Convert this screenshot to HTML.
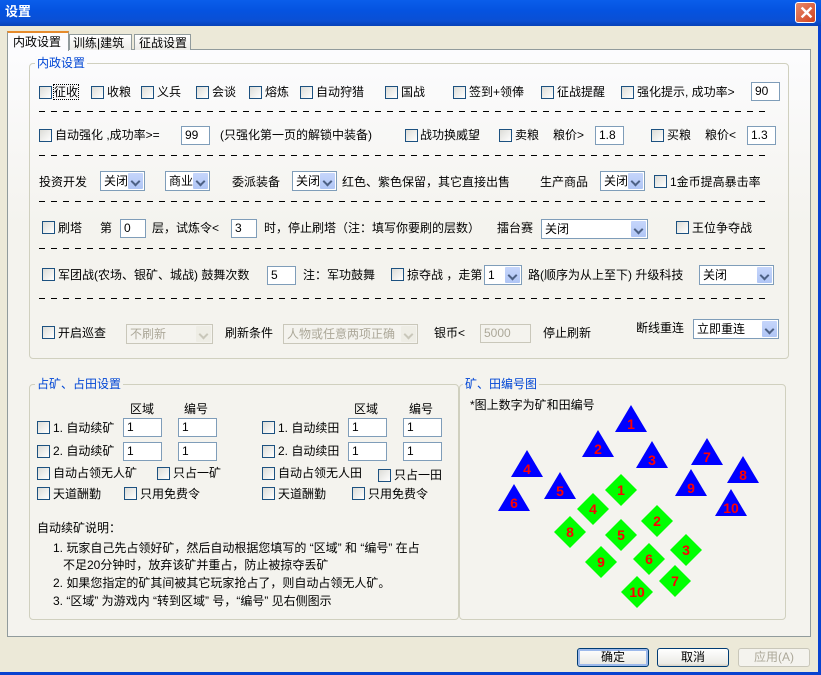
<!DOCTYPE html>
<html><head><meta charset="utf-8"><style>
*{margin:0;padding:0;box-sizing:border-box}
body{width:821px;height:675px;overflow:hidden;background:#ECE9D8;font:12px "Liberation Sans","Noto Sans CJK SC",sans-serif;color:#000;position:relative}
.a{position:absolute;white-space:nowrap;line-height:14px}
.cb{position:absolute;width:13px;height:13px;border:1px solid #1C5180;background:linear-gradient(135deg,#DCDCD7,#fff)}
.in{position:absolute;height:19px;border:1px solid #7F9DB9;background:#fff;padding:1px 3px;line-height:15px;font-size:12px}
.sel{position:absolute;height:20px;border:1px solid #7F9DB9;background:#fff;padding:2px 3px;line-height:14px}
.sel:after{content:"";position:absolute;right:1px;top:1px;width:15px;height:16px;background:#B9CEF8 linear-gradient(#C6D6FB,#B0C6F5);border-radius:1px}
.sel:before{content:"";position:absolute;right:5px;top:6px;width:5px;height:5px;border-right:2px solid #4D6185;border-bottom:2px solid #4D6185;transform:rotate(45deg);z-index:2}
.dis{border-color:#C9C7BA;color:#ACA899;background:#F4F3EE}
.dis:after{background:#EEEDE5}
.dis:before{border-color:#C9C7BA}
.dash{position:absolute;left:39px;width:728px;height:1px;background:repeating-linear-gradient(90deg,#000 0 6px,transparent 6px 12px)}
.grp{position:absolute;border:1px solid #D0D0BF;border-radius:4px}
.gl{position:absolute;color:#0046D5;background:#F8F8F6;padding:0 2px;line-height:14px}
.btn{position:absolute;top:648px;height:19px;width:72px;border:1px solid #003C74;border-radius:3px;background:linear-gradient(#fff,#ECEBE6 85%,#D6D0C5);text-align:center;line-height:16px}
</style></head><body>
<div style="position:absolute;left:0;top:0;width:821px;height:26px;background:linear-gradient(#0A5EEB,#0553E0 40%,#0A4FD4 80%,#0842B8)"></div>
<div class="a" style="left:5px;top:5px;color:#fff;font-weight:bold;font-size:13px">设置</div>
<div style="position:absolute;left:795px;top:2px;width:21px;height:21px;border:1px solid #fff;border-radius:3px;background:linear-gradient(135deg,#E68A6E,#D2421C)"></div>
<div class="a" style="left:799px;top:3px;color:#fff;font-weight:bold;font-size:18px;line-height:20px">✕</div>
<div style="position:absolute;right:0;top:26px;width:3px;height:649px;background:#0842D0"></div>
<div style="position:absolute;left:0;top:672px;width:821px;height:3px;background:#0842D0"></div>

<div style="position:absolute;left:7px;top:49px;width:804px;height:588px;border:1px solid #919B9C;background:linear-gradient(#FCFCFE,#F4F3EE 30%)"></div>
<div style="position:absolute;left:7px;top:31px;width:62px;height:20px;border:1px solid #919B9C;border-bottom:none;border-top:2px solid #E68B2C;background:#FCFCFE"></div>
<div class="a" style="left:13px;top:35px">内政设置</div>
<div style="position:absolute;left:69px;top:34px;width:63px;height:16px;border:1px solid #919B9C;border-bottom:none;background:linear-gradient(#fff,#ECEBE6)"></div>
<div class="a" style="left:73px;top:36px">训练|建筑</div>
<div style="position:absolute;left:134px;top:34px;width:57px;height:16px;border:1px solid #919B9C;border-bottom:none;background:linear-gradient(#fff,#ECEBE6)"></div>
<div class="a" style="left:139px;top:36px">征战设置</div>

<div class="grp" style="left:29px;top:63px;width:760px;height:296px"></div>
<div class="gl" style="left:35px;top:56px;background:#FBFBFC">内政设置</div>

<div class="cb" style="left:39px;top:86px"></div><div class="a" style="left:54px;top:85px;outline:1px dotted #000">征收</div>
<div class="cb" style="left:91px;top:86px"></div><div class="a" style="left:107px;top:85px">收粮</div>
<div class="cb" style="left:141px;top:86px"></div><div class="a" style="left:157px;top:85px">义兵</div>
<div class="cb" style="left:196px;top:86px"></div><div class="a" style="left:212px;top:85px">会谈</div>
<div class="cb" style="left:249px;top:86px"></div><div class="a" style="left:265px;top:85px">熔炼</div>
<div class="cb" style="left:300px;top:86px"></div><div class="a" style="left:316px;top:85px">自动狩猎</div>
<div class="cb" style="left:385px;top:86px"></div><div class="a" style="left:401px;top:85px">国战</div>
<div class="cb" style="left:453px;top:86px"></div><div class="a" style="left:469px;top:85px">签到+领俸</div>
<div class="cb" style="left:541px;top:86px"></div><div class="a" style="left:557px;top:85px">征战提醒</div>
<div class="cb" style="left:621px;top:86px"></div><div class="a" style="left:637px;top:85px">强化提示, 成功率&gt;</div>
<div class="in" style="left:751px;top:82px;width:29px">90</div>
<div class="dash" style="top:111px"></div>

<div class="cb" style="left:39px;top:129px"></div><div class="a" style="left:55px;top:128px">自动强化 ,成功率&gt;=</div>
<div class="in" style="left:181px;top:126px;width:29px">99</div>
<div class="a" style="left:220px;top:128px">(只强化第一页的解锁中装备)</div>
<div class="cb" style="left:405px;top:129px"></div><div class="a" style="left:420px;top:128px">战功换威望</div>
<div class="cb" style="left:499px;top:129px"></div><div class="a" style="left:515px;top:128px">卖粮</div>
<div class="a" style="left:553px;top:128px">粮价&gt;</div>
<div class="in" style="left:595px;top:126px;width:29px">1.8</div>
<div class="cb" style="left:651px;top:129px"></div><div class="a" style="left:667px;top:128px">买粮</div>
<div class="a" style="left:705px;top:128px">粮价&lt;</div>
<div class="in" style="left:747px;top:126px;width:29px">1.3</div>
<div class="dash" style="top:155px"></div>

<div class="a" style="left:39px;top:175px">投资开发</div>
<div class="sel" style="left:100px;top:171px;width:45px">关闭</div>
<div class="sel" style="left:165px;top:171px;width:45px">商业</div>
<div class="a" style="left:232px;top:175px">委派装备</div>
<div class="sel" style="left:292px;top:171px;width:45px">关闭</div>
<div class="a" style="left:342px;top:175px">红色、紫色保留，其它直接出售</div>
<div class="a" style="left:540px;top:175px">生产商品</div>
<div class="sel" style="left:600px;top:171px;width:45px">关闭</div>
<div class="cb" style="left:654px;top:175px"></div><div class="a" style="left:670px;top:175px">1金币提高暴击率</div>
<div class="dash" style="top:201px"></div>

<div class="cb" style="left:42px;top:221px"></div><div class="a" style="left:58px;top:221px">刷塔</div>
<div class="a" style="left:100px;top:221px">第</div>
<div class="in" style="left:120px;top:219px;width:26px">0</div>
<div class="a" style="left:152px;top:221px">层，试炼令&lt;</div>
<div class="in" style="left:231px;top:219px;width:26px">3</div>
<div class="a" style="left:264px;top:221px">时，停止刷塔（注：填写你要刷的层数）</div>
<div class="a" style="left:497px;top:221px">擂台赛</div>
<div class="sel" style="left:541px;top:219px;width:107px">关闭</div>
<div class="cb" style="left:676px;top:221px"></div><div class="a" style="left:692px;top:221px">王位争夺战</div>
<div class="dash" style="top:248px"></div>

<div class="cb" style="left:42px;top:268px"></div><div class="a" style="left:58px;top:268px">军团战(农场、银矿、城战) 鼓舞次数</div>
<div class="in" style="left:267px;top:266px;width:29px">5</div>
<div class="a" style="left:303px;top:268px">注：军功鼓舞</div>
<div class="cb" style="left:391px;top:268px"></div><div class="a" style="left:407px;top:268px">掠夺战 ，走第</div>
<div class="sel" style="left:484px;top:265px;width:38px">1</div>
<div class="a" style="left:528px;top:268px">路(顺序为从上至下) 升级科技</div>
<div class="sel" style="left:699px;top:265px;width:75px">关闭</div>
<div class="dash" style="top:298px"></div>

<div class="cb" style="left:42px;top:326px"></div><div class="a" style="left:58px;top:326px">开启巡查</div>
<div class="sel dis" style="left:126px;top:324px;width:87px">不刷新</div>
<div class="a" style="left:225px;top:326px">刷新条件</div>
<div class="sel dis" style="left:283px;top:324px;width:135px">人物或任意两项正确</div>
<div class="a" style="left:434px;top:326px">银币&lt;</div>
<div class="in dis" style="left:480px;top:324px;width:51px">5000</div>
<div class="a" style="left:543px;top:326px">停止刷新</div>
<div class="a" style="left:636px;top:321px">断线重连</div>
<div class="sel" style="left:693px;top:319px;width:86px">立即重连</div>

<div class="grp" style="left:29px;top:384px;width:430px;height:236px"></div>
<div class="gl" style="left:35px;top:377px;background:#F4F3EE">占矿、占田设置</div>
<div class="a" style="left:130px;top:402px">区域</div><div class="a" style="left:184px;top:402px">编号</div>
<div class="a" style="left:354px;top:402px">区域</div><div class="a" style="left:409px;top:402px">编号</div>
<div class="cb" style="left:37px;top:421px"></div><div class="a" style="left:53px;top:421px">1. 自动续矿</div>
<div class="in" style="left:123px;top:418px;width:39px;height:19px">1</div><div class="in" style="left:178px;top:418px;width:39px;height:19px">1</div>
<div class="cb" style="left:262px;top:421px"></div><div class="a" style="left:278px;top:421px">1. 自动续田</div>
<div class="in" style="left:348px;top:418px;width:39px;height:19px">1</div><div class="in" style="left:403px;top:418px;width:39px;height:19px">1</div>
<div class="cb" style="left:37px;top:445px"></div><div class="a" style="left:53px;top:444px">2. 自动续矿</div>
<div class="in" style="left:123px;top:442px;width:39px;height:19px">1</div><div class="in" style="left:178px;top:442px;width:39px;height:19px">1</div>
<div class="cb" style="left:262px;top:445px"></div><div class="a" style="left:278px;top:444px">2. 自动续田</div>
<div class="in" style="left:348px;top:442px;width:39px;height:19px">1</div><div class="in" style="left:403px;top:442px;width:39px;height:19px">1</div>
<div class="cb" style="left:37px;top:467px"></div><div class="a" style="left:53px;top:466px">自动占领无人矿</div>
<div class="cb" style="left:157px;top:467px"></div><div class="a" style="left:173px;top:466px">只占一矿</div>
<div class="cb" style="left:262px;top:467px"></div><div class="a" style="left:278px;top:466px">自动占领无人田</div>
<div class="cb" style="left:378px;top:469px"></div><div class="a" style="left:394px;top:468px">只占一田</div>
<div class="cb" style="left:37px;top:487px"></div><div class="a" style="left:53px;top:487px">天道酬勤</div>
<div class="cb" style="left:124px;top:487px"></div><div class="a" style="left:140px;top:487px">只用免费令</div>
<div class="cb" style="left:262px;top:487px"></div><div class="a" style="left:278px;top:487px">天道酬勤</div>
<div class="cb" style="left:352px;top:487px"></div><div class="a" style="left:368px;top:487px">只用免费令</div>
<div class="a" style="left:37px;top:521px">自动续矿说明：</div>
<div class="a" style="left:53px;top:541px">1. 玩家自己先占领好矿，然后自动根据您填写的 “区域” 和 “编号” 在占</div>
<div class="a" style="left:63px;top:558px">不足20分钟时，放弃该矿并重占，防止被掠夺丢矿</div>
<div class="a" style="left:53px;top:576px">2. 如果您指定的矿其间被其它玩家抢占了，则自动占领无人矿。</div>
<div class="a" style="left:53px;top:594px">3. “区域” 为游戏内 “转到区域” 号，“编号” 见右侧图示</div>

<div class="grp" style="left:459px;top:384px;width:327px;height:236px"></div>
<div class="gl" style="left:463px;top:377px;background:#F4F3EE">矿、田编号图</div>
<div class="a" style="left:470px;top:398px">*图上数字为矿和田编号</div>
<svg style="position:absolute;left:0;top:0" width="821" height="675" font-family="Liberation Sans,sans-serif" font-weight="bold" font-size="14" fill="#FF0000" text-anchor="middle">
<g fill="#0000FF">
<polygon points="631,405 615,432 647,432"/><polygon points="598,430 582,457 614,457"/><polygon points="652,441 636,468 668,468"/>
<polygon points="707,438 691,465 723,465"/><polygon points="743,456 727,483 759,483"/><polygon points="527,450 511,477 543,477"/>
<polygon points="560,472 544,499 576,499"/><polygon points="514,484 498,511 530,511"/><polygon points="691,469 675,496 707,496"/>
<polygon points="731,489 715,516 747,516"/></g>
<g fill="#00FF00">
<polygon points="621,474 637,490 621,506 605,490"/><polygon points="593,493 609,509 593,525 577,509"/><polygon points="570,516 586,532 570,548 554,532"/>
<polygon points="621,519 637,535 621,551 605,535"/><polygon points="657,505 673,521 657,537 641,521"/><polygon points="686,534 702,550 686,566 670,550"/>
<polygon points="649,543 665,559 649,575 633,559"/><polygon points="601,546 617,562 601,578 585,562"/><polygon points="675,565 691,581 675,597 659,581"/>
<polygon points="637,576 653,592 637,608 621,592"/></g>
<text x="631" y="429">1</text><text x="598" y="454">2</text><text x="652" y="465">3</text><text x="707" y="462">7</text><text x="743" y="480">8</text>
<text x="527" y="474">4</text><text x="560" y="496">5</text><text x="514" y="508">6</text><text x="691" y="493">9</text><text x="731" y="513">10</text>
<text x="621" y="495">1</text><text x="593" y="514">4</text><text x="570" y="537">8</text><text x="621" y="540">5</text><text x="657" y="526">2</text>
<text x="686" y="555">3</text><text x="649" y="564">6</text><text x="601" y="567">9</text><text x="675" y="586">7</text><text x="637" y="597">10</text>
</svg>

<div class="btn" style="left:577px;box-shadow:inset 0 0 0 2px #9DB9EB">确定</div>
<div class="btn" style="left:657px">取消</div>
<div class="btn" style="left:738px;border-color:#C9C7BA;color:#ACA899;background:#F4F3EE">应用(A)</div>
</body></html>
